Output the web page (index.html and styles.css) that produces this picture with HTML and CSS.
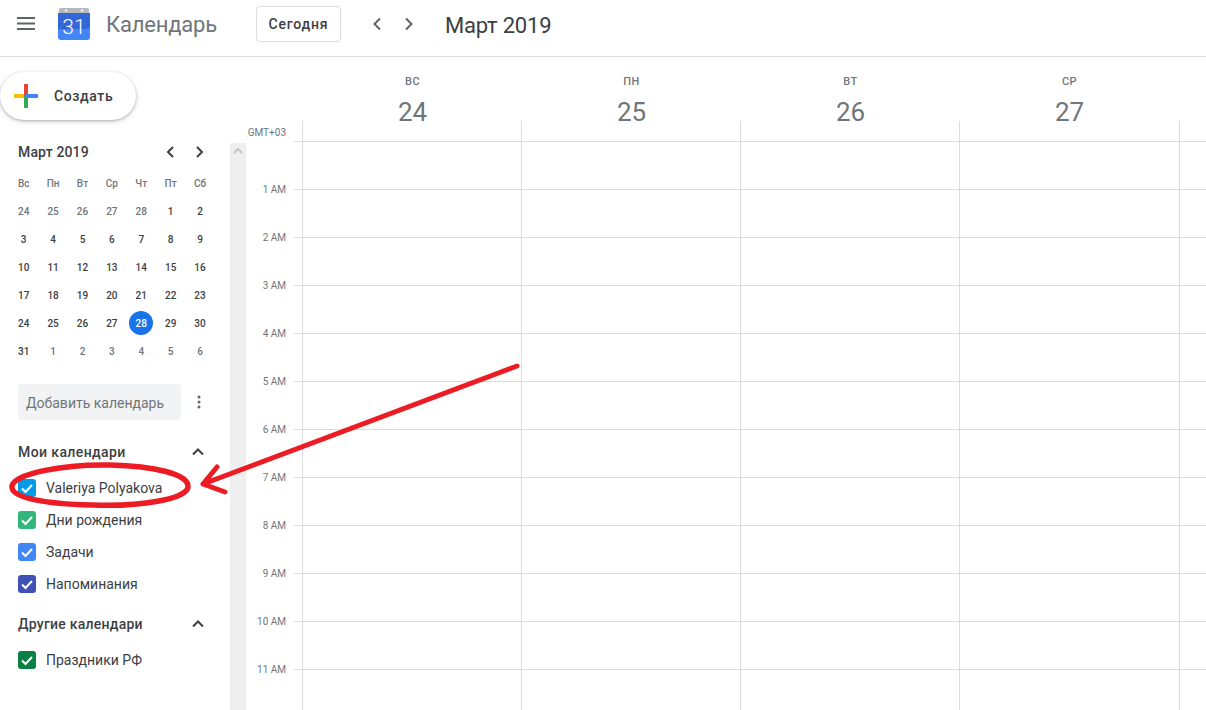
FILE: index.html
```html
<!DOCTYPE html>
<html lang="ru">
<head>
<meta charset="utf-8">
<title>Календарь</title>
<link rel="stylesheet" href="styles.css">
</head>
<body>
<header class="topbar">
  <button class="menu" aria-label="Меню"><svg width="18" height="14" viewBox="0 0 18 14"><path d="M0 1h18M0 6.5h18M0 12h18" class="menu-lines"/></svg></button>
  <svg class="logo" width="32" height="32" viewBox="0 0 32 32">
    <path d="M3 0h26a2 2 0 0 1 2 2v4H1V2a2 2 0 0 1 2-2z" fill="#b4b8bd"/>
    <path d="M0 5h32v24a3 3 0 0 1-3 3H3a3 3 0 0 1-3-3z" fill="#4285f4"/>
    <path d="M0 5h32v14L28 21H0z" fill="#3367d6"/>
    <circle cx="8" cy="2.5" r="1.3" fill="#f1f3f4"/><circle cx="24" cy="2.5" r="1.3" fill="#f1f3f4"/>
    <text x="16" y="26" class="logo-num">31</text>
  </svg>
  <span class="brand">Календарь</span>
  <button class="today">Сегодня</button>
  <div class="nav">
    <svg width="10" height="14" viewBox="0 0 10 14"><path d="M8 1.5 2.5 7 8 12.5" class="chev"/></svg>
    <svg width="10" height="14" viewBox="0 0 10 14"><path d="M2 1.5 7.5 7 2 12.5" class="chev"/></svg>
  </div>
  <h1 class="period">Март 2019</h1>
</header>
<div class="main">
  <aside class="sidebar">
    <button class="create">
      <svg width="24" height="24" viewBox="0 0 24 24">
        <rect x="10" y="0" width="4" height="12" fill="#ea4335"/>
        <rect x="10" y="12" width="4" height="12" fill="#34a853"/>
        <rect x="0" y="10" width="10" height="4" fill="#fbbc04"/>
        <rect x="12" y="10" width="12" height="4" fill="#4285f4"/>
        <rect x="10" y="10" width="2" height="2" fill="#ea4335"/>
      </svg>
      <span>Создать</span>
    </button>
    <div class="mini-head">
      <span class="mini-title">Март 2019</span>
      <svg width="10" height="14" viewBox="0 0 10 14"><path d="M8 2 3 7l5 5" class="chev dark"/></svg>
      <svg width="10" height="14" viewBox="0 0 10 14"><path d="M2 2l5 5-5 5" class="chev dark"/></svg>
    </div>
    <div class="mini-grid">
      <span class="dow">Вс</span><span class="dow">Пн</span><span class="dow">Вт</span><span class="dow">Ср</span><span class="dow">Чт</span><span class="dow">Пт</span><span class="dow">Сб</span>
      <span class="muted">24</span><span class="muted">25</span><span class="muted">26</span><span class="muted">27</span><span class="muted">28</span><span>1</span><span>2</span>
      <span>3</span><span>4</span><span>5</span><span>6</span><span>7</span><span>8</span><span>9</span>
      <span>10</span><span>11</span><span>12</span><span>13</span><span>14</span><span>15</span><span>16</span>
      <span>17</span><span>18</span><span>19</span><span>20</span><span>21</span><span>22</span><span>23</span>
      <span>24</span><span>25</span><span>26</span><span>27</span><span class="current"><b>28</b></span><span>29</span><span>30</span>
      <span>31</span><span class="muted">1</span><span class="muted">2</span><span class="muted">3</span><span class="muted">4</span><span class="muted">5</span><span class="muted">6</span>
    </div>
    <div class="add-row">
      <div class="add-input">Добавить календарь</div>
      <svg width="4" height="14" viewBox="0 0 4 14"><circle cx="2" cy="2" r="1.5"/><circle cx="2" cy="7" r="1.5"/><circle cx="2" cy="12" r="1.5"/></svg>
    </div>
    <div class="section-head">
      <span>Мои календари</span>
      <svg width="12" height="8" viewBox="0 0 12 8"><path d="M1 6.5l5-5 5 5" class="chev dark"/></svg>
    </div>
    <ul class="cal-list">
      <li><svg class="check c-blue" width="18" height="18" viewBox="0 0 18 18"><path d="M4 9.5 7.5 13 14 6"/></svg>Valeriya Polyakova</li>
      <li><svg class="check c-green" width="18" height="18" viewBox="0 0 18 18"><path d="M4 9.5 7.5 13 14 6"/></svg>Дни рождения</li>
      <li><svg class="check c-task" width="18" height="18" viewBox="0 0 18 18"><path d="M4 9.5 7.5 13 14 6"/></svg>Задачи</li>
      <li><svg class="check c-indigo" width="18" height="18" viewBox="0 0 18 18"><path d="M4 9.5 7.5 13 14 6"/></svg>Напоминания</li>
    </ul>
    <div class="section-head second">
      <span>Другие календари</span>
      <svg width="12" height="8" viewBox="0 0 12 8"><path d="M1 6.5l5-5 5 5" class="chev dark"/></svg>
    </div>
    <ul class="cal-list">
      <li><svg class="check c-forest" width="18" height="18" viewBox="0 0 18 18"><path d="M4 9.5 7.5 13 14 6"/></svg>Праздники РФ</li>
    </ul>
  </aside>
  <div class="scrollbar"><svg width="10" height="6" viewBox="0 0 10 6"><path d="M1 5l4-4 4 4" class="scroll-arrow"/></svg></div>
  <section class="calendar">
    <div class="day-heads">
      <div class="day-head"><span class="dname">ВС</span><span class="dnum">24</span></div>
      <div class="day-head"><span class="dname">ПН</span><span class="dnum">25</span></div>
      <div class="day-head"><span class="dname">ВТ</span><span class="dnum">26</span></div>
      <div class="day-head"><span class="dname">СР</span><span class="dnum">27</span></div>
    </div>
    <div class="body">
      <div class="times">
        <span class="gmt">GMT+03</span>
        <span>1 AM</span><span>2 AM</span><span>3 AM</span><span>4 AM</span><span>5 AM</span><span>6 AM</span><span>7 AM</span><span>8 AM</span><span>9 AM</span><span>10 AM</span><span>11 AM</span>
      </div>
      <div class="col tick"><div class="lines"></div></div>
      <div class="col day"><div class="lines"></div></div>
      <div class="col day"><div class="lines"></div></div>
      <div class="col day"><div class="lines"></div></div>
      <div class="col day wide"><div class="lines"></div></div>
      <div class="col rest"><div class="lines"></div></div>
    </div>
  </section>
</div>
<svg class="annotation" width="1206" height="710" viewBox="0 0 1206 710">
  <path class="ink oval" d="M12 486C14 474 62 464 110 465C154 466 189 474 188 487C187 499 140 507 92 505C46 504 10 498 12 486Z"/>
  <path class="ink arrow" d="M517 366 203 484M217 467 203 484 225 492"/>
</svg>
</body>
</html>
```
FILE: styles.css
```css
* { box-sizing: border-box; }
html, body { margin: 0; height: 100%; }
body {
  width: 1206px;
  height: 710px;
  overflow: hidden;
  position: relative;
  background: #fff;
  font-family: Roboto, "Liberation Sans", sans-serif;
  color: #3c4043;
  display: flex;
  flex-direction: column;
}
button { font: inherit; color: inherit; background: none; border: 0; padding: 0; }
ul { list-style: none; margin: 0; padding: 0; }

.topbar {
  height: 57px;
  flex: none;
  display: flex;
  align-items: center;
  border-bottom: 1px solid #dadce0;
  padding: 0 0 8px 17px;
}
.menu { display: flex; width: 18px; height: 14px; margin-right: 23px; }
.menu-lines { stroke: #5f6368; stroke-width: 2; fill: none; }
.logo { margin-right: 16px; flex: none; }
.logo-num { font-size: 21px; fill: #fff; text-anchor: middle; font-weight: 300; }
.brand { font-size: 22px; color: #70757a; width: 150px; letter-spacing: -.2px; }
.today {
  width: 85px;
  height: 36px;
  border: 1px solid #dadce0;
  border-radius: 4px;
  font-size: 14px;
  font-weight: 500;
  letter-spacing: .8px;
  color: #3c4043;
  margin-right: 31px;
}
.nav { display: flex; gap: 22px; margin-right: 31px; }
.chev { fill: none; stroke: #5f6368; stroke-width: 2; }
.chev.dark { stroke: #3c4043; }
.period { margin: 0; font-size: 22px; font-weight: 400; color: #3c4043; letter-spacing: -.2px; position: relative; top: 1px; }

.main { flex: 1; display: flex; min-height: 0; }
.sidebar { width: 230px; flex: none; display: flex; flex-direction: column; }
.create {
  width: 136px;
  height: 48px;
  margin-top: 15px;
  border-radius: 24px;
  box-shadow: 0 1px 3px rgba(60,64,67,.35), 0 2px 6px rgba(60,64,67,.12);
  display: flex;
  align-items: center;
  padding-left: 14px;
  gap: 16px;
  font-size: 14px;
  font-weight: 500;
  letter-spacing: .6px;
}
.mini-head {
  display: flex;
  align-items: center;
  height: 20px;
  margin-top: 22px;
  padding-left: 18px;
}
.mini-title { width: 147px; font-size: 14px; font-weight: 500; letter-spacing: .15px; }
.mini-head svg + svg { margin-left: 20px; }
.mini-grid {
  display: grid;
  grid-template-columns: repeat(7, 29.4px);
  grid-auto-rows: 28px;
  margin: 7px 0 0 9px;
  font-size: 10px;
  font-weight: 500;
}
.mini-grid span { display: flex; align-items: center; justify-content: center; }
.mini-grid .dow, .mini-grid .muted { color: #70757a; }
.mini-grid b {
  width: 24px;
  height: 24px;
  border-radius: 50%;
  background: #1a73e8;
  color: #fff;
  font-weight: 500;
  display: flex;
  align-items: center;
  justify-content: center;
}
.add-row {
  display: flex;
  align-items: center;
  margin: 19px 0 0 18px;
  gap: 16px;
}
.add-row svg { fill: #5f6368; }
.add-input {
  width: 163px;
  height: 36px;
  background: #f1f3f4;
  border-radius: 4px;
  padding-left: 8px;
  font-size: 14px;
  line-height: 38px;
  color: #70757a;
}
.section-head {
  display: flex;
  align-items: center;
  justify-content: space-between;
  margin-top: 22px;
  padding: 0 26px 0 18px;
  height: 20px;
  font-size: 14px;
  font-weight: 500;
  letter-spacing: .4px;
}
.section-head.second { margin-top: 14px; letter-spacing: .25px; }
.cal-list { margin-top: 10px; }
.cal-list li {
  height: 32px;
  display: flex;
  align-items: center;
  padding-left: 18px;
  gap: 10px;
  font-size: 14px;
}
.check { flex: none; border-radius: 3px; }
.check path { fill: none; stroke: #fff; stroke-width: 2; }
.c-blue { background: #039be5; }
.c-green { background: #33b679; }
.c-task { background: #4285f4; }
.c-indigo { background: #3f51b5; }
.c-forest { background: #0b8043; }

.scrollbar {
  width: 16px;
  flex: none;
  margin-top: 86px;
  background: #efefef;
  display: flex;
  justify-content: center;
  padding-top: 5px;
}
.scroll-arrow { fill: none; stroke: #c4c4c4; stroke-width: 2; }

.calendar { flex: 1; min-width: 0; display: flex; flex-direction: column; }
.day-heads {
  height: 64px;
  flex: none;
  display: grid;
  grid-template-columns: repeat(4, 219px);
  padding-left: 57px;
}
.day-head { display: flex; flex-direction: column; align-items: center; }
.dname { font-size: 11px; font-weight: 500; color: #70757a; margin-top: 18px; line-height: 14px; letter-spacing: .4px; }
.dnum { font-size: 26px; line-height: 32px; color: #70757a; margin-top: 7px; }

.body { flex: 1; display: flex; min-height: 0; }
.times {
  width: 48px;
  flex: none;
  display: flex;
  flex-direction: column;
  align-items: flex-end;
  gap: 32px;
  padding: 4px 8px 0 0;
  font-size: 10px;
  color: #70757a;
}
.times span { height: 16px; line-height: 16px; white-space: nowrap; }
.times .gmt { margin-bottom: 9px; }
.col { padding-top: 20px; }
.tick { width: 8px; flex: none; }
.day { width: 219px; flex: none; border-left: 1px solid #dadce0; }
.day.wide { width: 220px; }
.rest { flex: 1; border-left: 1px solid #dadce0; }
.lines {
  height: 100%;
  background: repeating-linear-gradient(to bottom, #dadce0 0, #dadce0 1px, transparent 1px, transparent 48px);
}

.annotation { position: absolute; left: 0; top: 0; pointer-events: none; }
.ink { fill: none; stroke: #ed1c24; stroke-linecap: round; stroke-linejoin: round; }
.oval { stroke-width: 5.5; }
.arrow { stroke-width: 5; }
```
